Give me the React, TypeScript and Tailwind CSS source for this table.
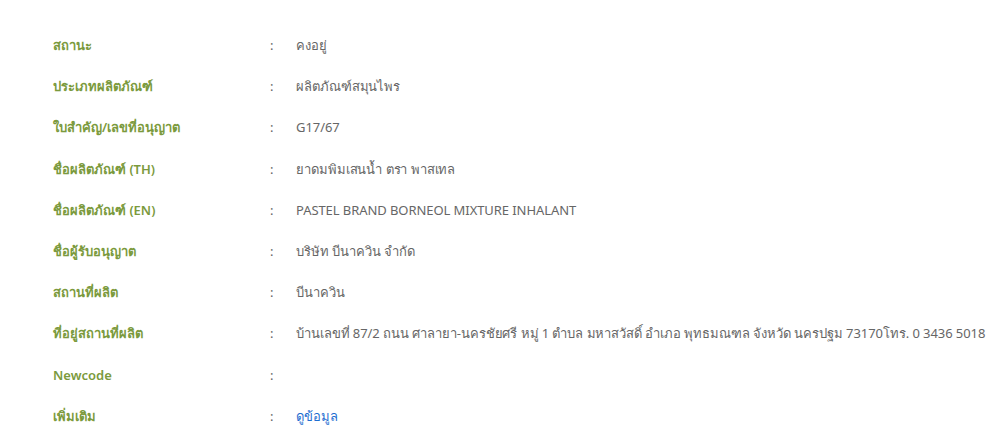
const rows: { label: string; value: string; link?: boolean }[] = [
  { label: "สถานะ", value: "คงอยู่" },
  { label: "ประเภทผลิตภัณฑ์", value: "ผลิตภัณฑ์สมุนไพร" },
  { label: "ใบสำคัญ/เลขที่อนุญาต", value: "G17/67" },
  { label: "ชื่อผลิตภัณฑ์ (TH)", value: "ยาดมพิมเสนน้ำ ตรา พาสเทล" },
  { label: "ชื่อผลิตภัณฑ์ (EN)", value: "PASTEL BRAND BORNEOL MIXTURE INHALANT" },
  { label: "ชื่อผู้รับอนุญาต", value: "บริษัท บีนาควิน จำกัด" },
  { label: "สถานที่ผลิต", value: "บีนาควิน" },
  {
    label: "ที่อยู่สถานที่ผลิต",
    value:
      "บ้านเลขที่ 87/2 ถนน ศาลายา-นครชัยศรี หมู่ 1 ตำบล มหาสวัสดิ์ อำเภอ พุทธมณฑล จังหวัด นครปฐม 73170โทร. 0 3436 5018",
  },
  { label: "Newcode", value: "" },
  { label: "เพิ่มเติม", value: "ดูข้อมูล", link: true },
];

export default function App() {
  return (
    <div className="min-h-[440px] bg-white pl-[53px] pt-[36px] font-['Noto_Sans','Liberation_Sans',sans-serif] text-[13px]">
      <dl>
        {rows.map((r) => (
          <div key={r.label} className="grid h-[41.2px] grid-cols-[217px_26px_1fr] items-start">
            <dt className="font-semibold text-[#7b9a3d]">{r.label}</dt>
            <span className="text-[#666]">:</span>
            <dd className="whitespace-nowrap tracking-[-0.07px]">
              {r.link ? (
                <a href="#" className="text-[#1f6fd1]">
                  {r.value}
                </a>
              ) : (
                <span className="text-[#666]">{r.value}</span>
              )}
            </dd>
          </div>
        ))}
      </dl>
    </div>
  );
}
